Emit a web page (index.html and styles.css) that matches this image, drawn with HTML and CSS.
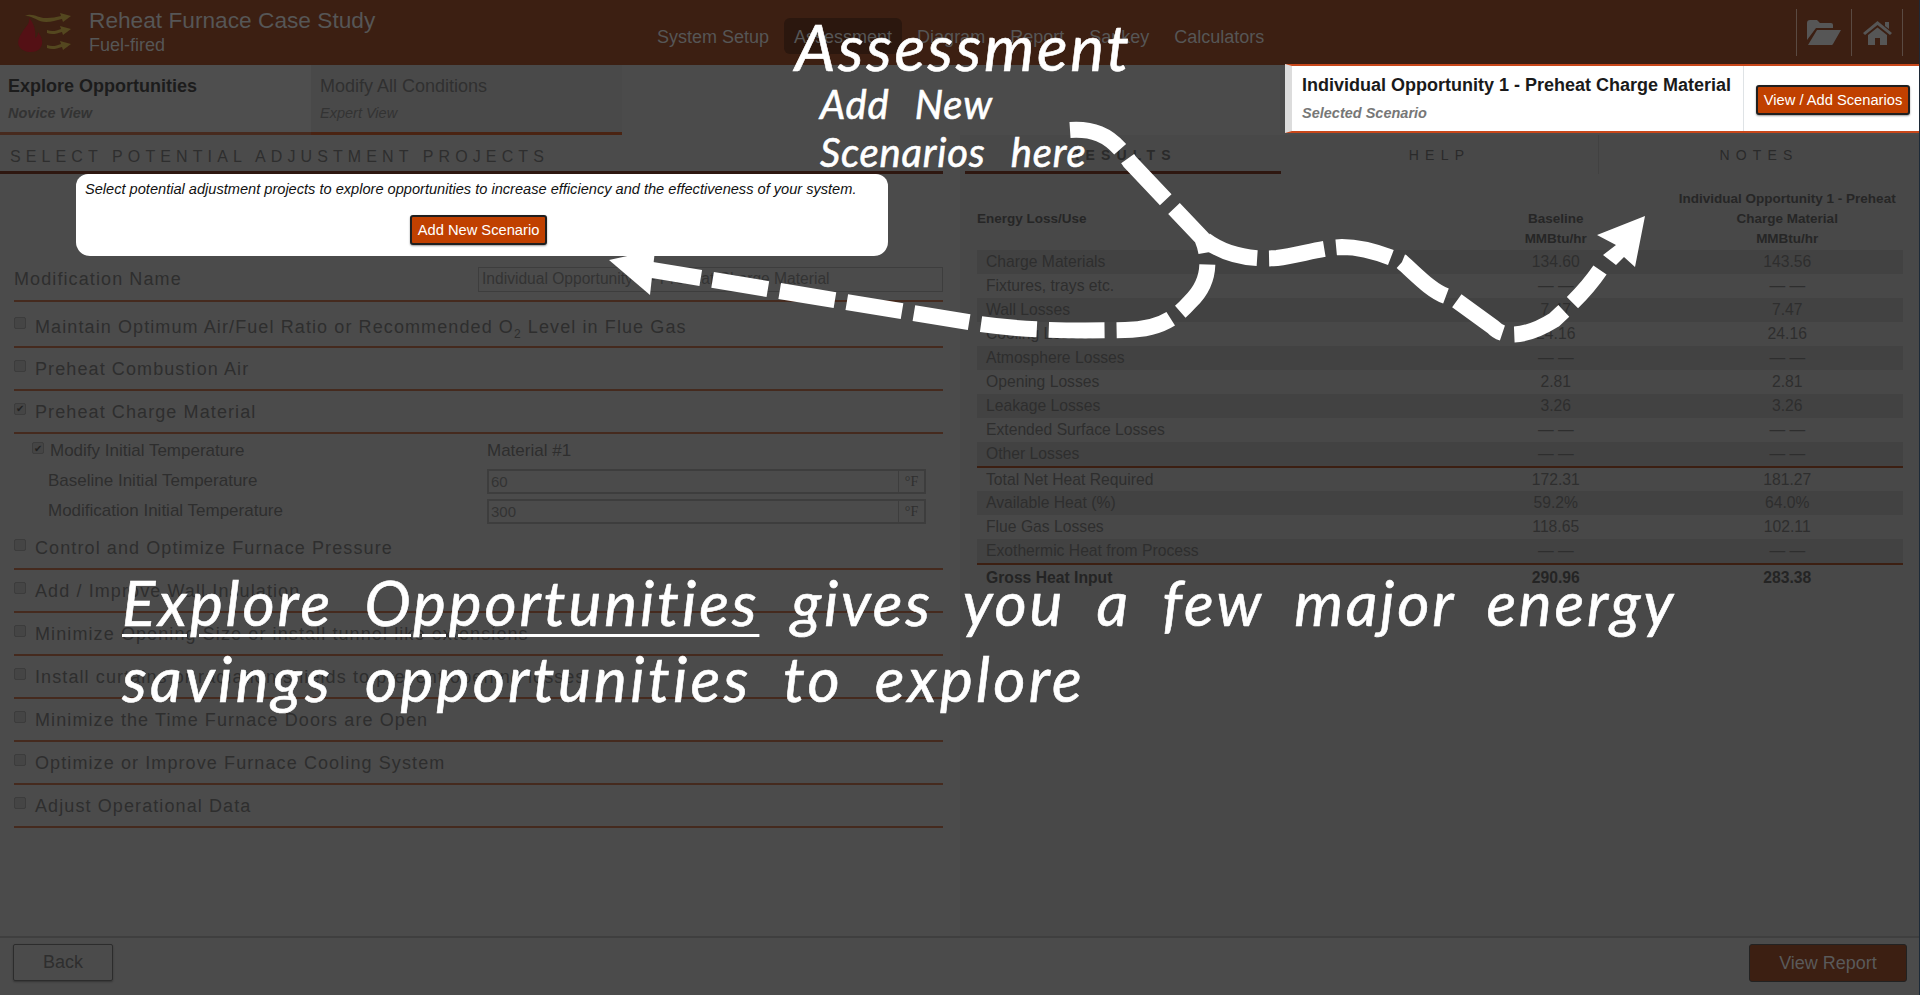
FILE: index.html
```html
<!DOCTYPE html>
<html lang="en">

<head>
    <meta charset="UTF-8">
    <title>Reheat Furnace Case Study</title>
    <link rel="stylesheet" href="styles.css">
</head>

<body>
    <header class="topbar">
        <svg class="logo" viewBox="0 0 56 40" width="56" height="40">
            <path class="logo-flame" d="M13 6c1 6-3 8-6 13-4 6-6 11-4 15 2 4 7 6 12 6 6 0 10-3 11-8 1-5-2-9-4-12 0 3-1 5-3 6 1-7-1-15-6-20z" />
            <path class="logo-arrow" d="M9 4c8-4 14 3 22 2 5 0 9-1 14-2l-1-3 11 3-8 6-1-3c-6 1-10 3-16 3C22 10 16 3 9 4z" />
            <path class="logo-arrow" d="M31 18c5 2 9 1 14-1l-1-3 11 3-8 6-1-3c-6 2-10 3-15 1z" />
            <path class="logo-arrow" d="M31 33c5 2 9 1 14-1l-1-3 11 3-8 6-1-3c-6 2-10 3-15 1z" />
        </svg>
        <div class="brand">
            <div class="brand-title">Reheat Furnace Case Study</div>
            <div class="brand-sub">Fuel-fired</div>
        </div>
        <nav class="main-nav">
            <a>System Setup</a>
            <a class="active">Assessment</a>
            <a>Diagram</a>
            <a>Report</a>
            <a>Sankey</a>
            <a>Calculators</a>
        </nav>
        <div class="top-icons">
            <span class="icon-cell">
                <svg viewBox="0 0 34 25" width="34" height="25">
                    <path d="M0 3a3 3 0 0 1 3-3h7l3 3h11a2 2 0 0 1 2 2v3H9L0 20z" />
                    <path d="M10 10h24l-8 14a2 2 0 0 1-2 1H1z" />
                </svg>
            </span>
            <span class="icon-cell">
                <svg viewBox="0 0 29 24" width="29" height="24">
                    <path d="M14.5 0 29 12l-2 2L14.5 4 2 14l-2-2zM22 1h4v7l-4-3z" />
                    <path d="M5 14l9.5-7.5L24 14v10h-7v-7h-5v7H5z" />
                </svg>
            </span>
        </div>
    </header>

    <div class="subnav">
        <div class="mode-tab mode-first">
            <div class="mode-name"><b>Explore Opportunities</b></div>
            <div class="mode-hint">Novice View</div>
        </div>
        <div class="mode-tab mode-second">
            <div class="mode-name">Modify All Conditions</div>
            <div class="mode-hint">Expert View</div>
        </div>
        <div class="scenario">
            <div class="scenario-text">
                <div class="scenario-name">Individual Opportunity 1 - Preheat Charge Material</div>
                <div class="scenario-hint">Selected Scenario</div>
            </div>
            <div class="scenario-action">
                <button class="btn-orange btn-view">View / Add Scenarios</button>
            </div>
        </div>
    </div>

    <main class="content">
        <section class="left-panel">
            <h2 class="section-title">SELECT POTENTIAL ADJUSTMENT PROJECTS</h2>
            <div class="callout">
                <p>Select potential adjustment projects to explore opportunities to increase efficiency and the effectiveness of your system.</p>
                <button class="btn-orange btn-add">Add New Scenario</button>
            </div>
            <div class="form-list">
                <div class="row row-name">
                    <label>Modification Name</label>
                    <input class="name-input" type="text" value="Individual Opportunity 1 - Preheat Charge Material">
                </div>
                <div class="row row-o2"><span class="box"></span><span>Maintain Optimum Air/Fuel Ratio or Recommended O<sub>2</sub> Level in Flue Gas</span></div>
                <div class="row"><span class="box"></span>Preheat Combustion Air</div>
                <div class="row"><span class="box checked">✔</span>Preheat Charge Material</div>
                <div class="sub-form">
                    <div class="sub-row">
                        <div class="sub-label sub-check"><span class="box checked">✔</span>Modify Initial Temperature</div>
                        <div>Material #1</div>
                    </div>
                    <div class="sub-row">
                        <div class="sub-label">Baseline Initial Temperature</div>
                        <div class="unit-input"><span>60</span><i>°F</i></div>
                    </div>
                    <div class="sub-row">
                        <div class="sub-label">Modification Initial Temperature</div>
                        <div class="unit-input"><span>300</span><i>°F</i></div>
                    </div>
                </div>
                <div class="row"><span class="box"></span>Control and Optimize Furnace Pressure</div>
                <div class="row"><span class="box"></span>Add / Improve Wall Insulation</div>
                <div class="row"><span class="box"></span>Minimize Opening Size or install tunnel like extensions</div>
                <div class="row"><span class="box"></span>Install curtains or radiation shields to prevent opening losses</div>
                <div class="row"><span class="box"></span>Minimize the Time Furnace Doors are Open</div>
                <div class="row"><span class="box"></span>Optimize or Improve Furnace Cooling System</div>
                <div class="row"><span class="box"></span>Adjust Operational Data</div>
            </div>
        </section>

        <section class="right-panel">
            <div class="tabs">
                <div class="tab tab-active">RESULTS</div>
                <div class="tab tab-help">HELP</div>
                <div class="tab tab-notes">NOTES</div>
            </div>
            <table class="results">
                <thead>
                    <tr>
                        <th class="col-name">Energy Loss/Use</th>
                        <th>Baseline<br>MMBtu/hr</th>
                        <th class="col-bottom">Individual Opportunity 1 - Preheat Charge Material<br>MMBtu/hr</th>
                    </tr>
                </thead>
                <tbody>
                    <tr class="dark"><td>Charge Materials</td><td>134.60</td><td>143.56</td></tr>
                    <tr><td>Fixtures, trays etc.</td><td>— —</td><td>— —</td></tr>
                    <tr class="dark"><td>Wall Losses</td><td>7.47</td><td>7.47</td></tr>
                    <tr><td>Cooling Losses</td><td>24.16</td><td>24.16</td></tr>
                    <tr class="dark"><td>Atmosphere Losses</td><td>— —</td><td>— —</td></tr>
                    <tr><td>Opening Losses</td><td>2.81</td><td>2.81</td></tr>
                    <tr class="dark"><td>Leakage Losses</td><td>3.26</td><td>3.26</td></tr>
                    <tr><td>Extended Surface Losses</td><td>— —</td><td>— —</td></tr>
                    <tr class="dark line-under"><td>Other Losses</td><td>— —</td><td>— —</td></tr>
                    <tr><td>Total Net Heat Required</td><td>172.31</td><td>181.27</td></tr>
                    <tr class="dark"><td>Available Heat (%)</td><td>59.2%</td><td>64.0%</td></tr>
                    <tr><td>Flue Gas Losses</td><td>118.65</td><td>102.11</td></tr>
                    <tr class="dark line-under"><td>Exothermic Heat from Process</td><td>— —</td><td>— —</td></tr>
                    <tr class="total"><td>Gross Heat Input</td><td>290.96</td><td>283.38</td></tr>
                </tbody>
            </table>
        </section>
    </main>

    <footer class="footer">
        <button class="btn-back">Back</button>
        <button class="btn-report">View Report</button>
    </footer>

    <!-- tutorial annotations on top of the page -->
    <svg class="arrows" viewBox="0 0 1920 995" width="1920" height="995">
        <path class="dash" d="M1070 130C1100 128 1115 140 1130 162L1202 238C1212 262 1208 285 1190 302C1172 322 1155 330 1125 330C1075 331 1030 331 980 324L640 268" />
        <path class="dash" d="M1205 240C1225 255 1250 260 1277 258C1300 255 1320 248 1342 247C1365 247 1385 255 1402 262C1420 278 1435 295 1453 298L1493 327C1505 340 1530 335 1554 320C1570 305 1585 292 1600 270" />
        <path class="head" d="M609 260 655 250 650 295z" />
        <path class="head" d="M1645 216 1597 235 1616 245 1603 255 1616 265 1624 257 1635 267z" />
    </svg>
    <div class="note note-title">Assessment</div>
    <div class="note note-add">Add New<br>Scenarios here</div>
    <div class="note note-main"><u>Explore Opportunities</u> <span class="note-rest">gives you a few major energy</span><br>savings opportunities to explore</div>
</body>

</html>
```

FILE: styles.css
```css
* {
    box-sizing: border-box;
}

html,
body {
    margin: 0;
    height: 100%;
    overflow: hidden;
}

body {
    position: relative;
    display: flex;
    flex-direction: column;
    width: 1920px;
    height: 995px;
    background: #4b4b4b;
    color: #2e2e2e;
    font-family: "Liberation Sans", Arial, sans-serif;
    border-right: 1px solid #1c2a38;
}

/* top bar */
.topbar {
    display: flex;
    height: 65px;
    background: #3c1f12;
    color: #565656;
    flex-shrink: 0;
}

.logo {
    margin: 12px 0 0 16px;
}

.logo-flame {
    fill: #541015;
}

.logo-arrow {
    fill: #54471f;
}

.brand {
    margin: 6px 0 0 17px;
    width: 500px;
}

.brand-title {
    font-size: 22.7px;
    line-height: 29px;
}

.brand-sub {
    font-size: 18px;
    line-height: 20px;
}

.main-nav {
    display: flex;
    gap: 5px;
    height: 36px;
    margin: 18px 0 0 58px;
    font-size: 18px;
}

.main-nav a {
    padding: 0 10px;
    line-height: 38px;
    border-radius: 6px;
}

.main-nav .active {
    background: #2b170e;
}

.top-icons {
    display: flex;
    margin: 9px 0 0 auto;
    padding-right: 16px;
    height: 47px;
}

.icon-cell {
    display: flex;
    align-items: center;
    justify-content: center;
    border-left: 1px solid #5a4a42;
    width: 55px;
}

.icon-cell:last-child {
    width: 52px;
    border-right: 1px solid #5a4a42;
}

.icon-cell svg {
    fill: #565656;
}

/* novice / expert switch and selected scenario */
.subnav {
    display: flex;
    height: 70px;
    flex-shrink: 0;
}

.mode-tab {
    width: 311px;
    padding: 11px 8px 0;
    background: #4e4e4e;
    border-bottom: 3px solid #3f3f3f;
    font-size: 18px;
}

.mode-first {
    border-bottom: 3px solid #472a1e;
}

.mode-second {
    padding-left: 9px;
    background: #494949;
    border-bottom: 3px solid #4a2312;
}

.mode-name {
    line-height: 20px;
    color: #303030;
}

.mode-name b {
    color: #1c1c1c;
}

.mode-hint {
    margin-top: 8px;
    font-size: 14.5px;
    line-height: 18px;
    font-style: italic;
    color: #333;
}

.mode-first .mode-hint {
    font-weight: bold;
}

.scenario {
    display: flex;
    width: 634px;
    margin-left: auto;
    background: #fff;
    border-top: 2px solid #c8471a;
    border-bottom: 2px solid #c8471a;
    border-left: 7px solid #dcdcdc;
    margin-top: -1px;
    height: 69px;
}

.scenario-text {
    width: 452px;
    padding: 9px 0 0 10px;
    border-right: 1px solid #dfe3e6;
}

.scenario-name {
    font-size: 18px;
    line-height: 20px;
    font-weight: bold;
    color: #1a1a1a;
}

.scenario-hint {
    margin-top: 9px;
    font-size: 14.5px;
    line-height: 18px;
    font-weight: bold;
    font-style: italic;
    color: #777;
}

.scenario-action {
    padding: 19px 0 0 12px;
}

.btn-orange {
    display: block;
    padding: 0;
    background: #c04000;
    color: #fff;
    border: 2px solid #1f1f1f;
    border-radius: 3px;
    font-family: inherit;
    font-size: 14.7px;
    box-shadow: 0 1px 2px rgba(0, 0, 0, 0.4);
}

.btn-view {
    width: 154px;
    height: 30px;
}

/* main two columns */
.content {
    display: flex;
    flex: 1;
    min-height: 0;
}

.left-panel {
    width: 960px;
    padding-right: 17px;
}

.section-title {
    margin: 0;
    height: 39px;
    padding: 0 0 0 10px;
    line-height: 44px;
    font-size: 16px;
    font-weight: normal;
    letter-spacing: 5.1px;
    border-bottom: 3px solid #2e1710;
}

.callout {
    width: 812px;
    height: 82px;
    margin-left: 76px;
    background: #fff;
    border-radius: 12px 12px 14px 14px;
    color: #111;
}

.callout p {
    margin: 0;
    padding: 5px 0 0 9px;
    font-size: 14.6px;
    line-height: 20px;
    font-style: italic;
}

.btn-add {
    width: 137px;
    height: 30px;
    margin: 16px 0 0 334px;
}

.form-list {
    padding-left: 14px;
}

.row {
    display: flex;
    align-items: center;
    height: 43px;
    padding-top: 2px;
    font-size: 18px;
    letter-spacing: 1.1px;
    border-bottom: 2px solid #452a1e;
    white-space: pre;
}

.row sub {
    font-size: 12px;
    line-height: 0;
}

.row-name {
    height: 46px;
    justify-content: space-between;
}

.row-o2 {
    height: 46px;
    padding-top: 6px;
}

.box {
    flex-shrink: 0;
    display: flex;
    align-items: center;
    justify-content: center;
    width: 12px;
    height: 12px;
    margin: -8px 9px 0 0;
    background: #454545;
    border: 1px solid #3c3c3c;
    border-radius: 2px;
    font-size: 10px;
    letter-spacing: 0;
    color: #222;
}

.name-input {
    width: 465px;
    height: 25px;
    padding: 0 3px;
    background: transparent;
    border: 1px solid #3d3d3d;
    font-family: inherit;
    font-size: 15.6px;
    letter-spacing: 0;
    color: #333;
}

.sub-form {
    height: 93px;
    padding-top: 2px;
    font-size: 17px;
}

.sub-row {
    display: flex;
    align-items: center;
    height: 30px;
    padding-left: 34px;
}

.sub-label {
    width: 439px;
}

.sub-check {
    display: flex;
    align-items: center;
    margin-left: -16px;
    width: 455px;
}

.sub-check .box {
    margin: -6px 6px 0 0;
}

.unit-input {
    display: flex;
    width: 439px;
    height: 25px;
    margin-top: 1px;
    border: 2px solid #3d3d3d;
    font-size: 15px;
    line-height: 22px;
    color: #333;
}

.unit-input span {
    flex: 1;
    padding-left: 2px;
}

.unit-input i {
    width: 26px;
    border-left: 1px solid #3d3d3d;
    font-family: "Liberation Serif", serif;
    font-style: normal;
    font-size: 14px;
    color: #2f2f2f;
    text-align: center;
}

/* results side */
.right-panel {
    width: 959px;
    background: #484848;
}

.tabs {
    display: flex;
    height: 39px;
    margin-left: 5px;
}

.tab {
    line-height: 40px;
    text-align: center;
    font-size: 14px;
    letter-spacing: 6.2px;
    color: #2a2a2a;
}

.tab-active {
    width: 316px;
    font-weight: bold;
    border-bottom: 3px solid #2e1710;
}

.tab-help {
    width: 318px;
    border-right: 1px solid #414141;
}

.tab-notes {
    flex: 1;
}

.results {
    width: 926px;
    margin: 15px 0 0 17px;
    border-collapse: collapse;
    table-layout: fixed;
    font-size: 15.7px;
}

.results th {
    width: 25%;
    padding: 0 0 1px;
    font-size: 13.5px;
    line-height: 20px;
    vertical-align: bottom;
    color: #262626;
}

.results .col-name {
    width: 50%;
    padding-bottom: 21px;
    text-align: left;
}

.results td {
    height: 24px;
    padding: 0;
    text-align: center;
    color: #2e2e2e;
}

.results td:first-child {
    padding-left: 9px;
    text-align: left;
}

.results .dark {
    background: #424242;
}

.results .line-under td {
    height: 25px;
    border-bottom: 2px solid #3c1f12;
}

.results .total td {
    height: 27px;
    font-weight: bold;
    color: #242424;
}

/* footer */
.footer {
    display: flex;
    justify-content: space-between;
    height: 59px;
    padding: 6px 12px 0 13px;
    border-top: 2px solid #3f3f3f;
    flex-shrink: 0;
}

.btn-back {
    width: 100px;
    height: 37px;
    background: transparent;
    border: 1px solid #2c2c2c;
    border-radius: 2px;
    font-family: inherit;
    font-size: 18px;
    color: #2e2e2e;
    box-shadow: 0 1px 2px rgba(0, 0, 0, 0.3);
}

.btn-report {
    width: 158px;
    height: 38px;
    background: #3c1f12;
    border: 1px solid #222;
    border-radius: 3px;
    font-family: inherit;
    font-size: 18px;
    color: #5a5a5a;
}

/* annotations */
.arrows {
    position: absolute;
    top: 0;
    left: 0;
    pointer-events: none;
}

.dash {
    fill: none;
    stroke: #fff;
    stroke-width: 16;
    stroke-dasharray: 56 12;
}

.head {
    fill: #fff;
}

.note {
    position: absolute;
    font-family: Lato, sans-serif;
    font-style: italic;
    color: #fff;
    white-space: nowrap;
    -webkit-text-stroke: 0.6px #fff;
}

.note-title {
    top: 9px;
    left: 795px;
    font-size: 64px;
    line-height: 76px;
    letter-spacing: 2.6px;
}

.note-add {
    top: 80px;
    left: 820px;
    font-size: 40px;
    line-height: 48px;
    letter-spacing: 0.8px;
    word-spacing: 15px;
}

.note-main {
    top: 564px;
    left: 122px;
    font-size: 62px;
    line-height: 76px;
    letter-spacing: 3.3px;
    word-spacing: 14px;
}

.note-main u {
    letter-spacing: 2.9px;
    text-decoration-thickness: 3px;
    text-underline-offset: 8px;
}

.note-rest {
    letter-spacing: 2.8px;
}
```
